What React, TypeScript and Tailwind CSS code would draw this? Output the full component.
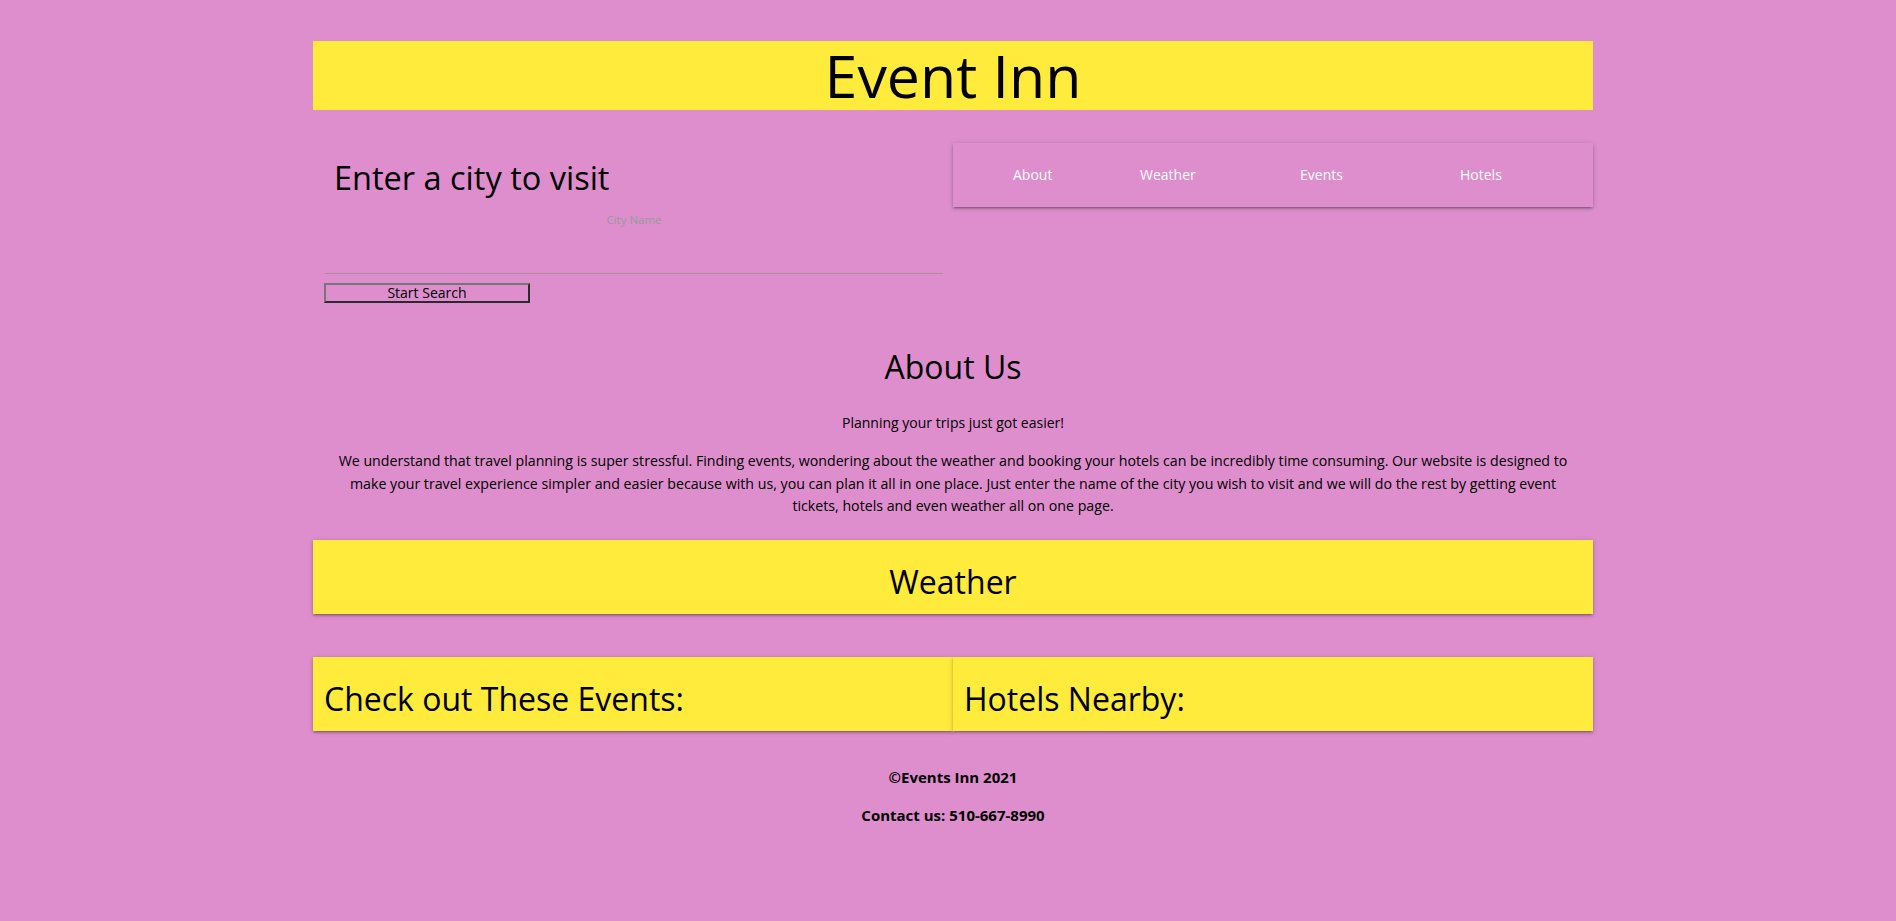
import React from 'react'

const cardShadow = 'shadow-[0_2px_2px_0_rgba(0,0,0,0.14),0_3px_1px_-2px_rgba(0,0,0,0.12),0_1px_5px_0_rgba(0,0,0,0.2)]'

function Nav() {
  const links = [
    { label: 'About', width: 'w-[127px]' },
    { label: 'Weather', width: 'w-[160px]' },
    { label: 'Events', width: 'w-[160px]' },
    { label: 'Hotels', width: 'w-auto' },
  ]
  return (
    <nav className={`flex h-[64px] items-center pl-[60px] ${cardShadow}`}>
      {links.map(link => (
        <a key={link.label} href="#" className={`${link.width} text-[14px] leading-[64px] text-white`}>
          {link.label}
        </a>
      ))}
    </nav>
  )
}

function SearchBox() {
  return (
    <div>
      <h4 className="mt-[17px] pl-[21px] text-[32.5px] leading-[35px]">Enter a city to visit</h4>
      <div className="ml-[12px] h-[79px] w-[618px] border-b border-[#a590a2]">
        <input
          type="text"
          placeholder="City Name"
          className="mt-[14px] h-[20px] w-full bg-transparent text-center text-[11.5px] outline-none placeholder:text-[#959c95]"
        />
      </div>
      <button
        type="button"
        className="ml-[11px] mt-[9px] h-[20px] w-[206px] border-2 border-t-[#767676] border-l-[#767676] border-r-[#2b2b2b] border-b-[#2b2b2b] text-[14px] leading-[16px]"
      >
        Start Search
      </button>
    </div>
  )
}

function Card({ title, center }: { title: string, center?: boolean }) {
  return (
    <div className={`h-[74px] bg-[#ffeb3b] px-[11px] pt-[23px] ${cardShadow} ${center ? 'text-center' : ''}`}>
      <h4 className="text-[32px] leading-[37px]">{title}</h4>
    </div>
  )
}

export default function App() {
  return (
    <div
      className="min-h-[921px] bg-[#de8ecd] pl-[10px] pb-[40px] text-black"
      style={{ fontFamily: '"Open Sans", "Noto Sans", sans-serif' }}
    >
      <div className="mx-auto w-[1280px] pt-[41px]">
        <header className="h-[69px] bg-[#ffeb3b] text-center">
          <h1 className="text-[59px] leading-[69px]">Event Inn</h1>
        </header>

        <div className="mt-[33px] grid grid-cols-2">
          <SearchBox />
          <div>
            <Nav />
          </div>
        </div>

        {/* About */}
        <section className="text-center">
          <h4 className="mt-[45px] text-[32px] leading-[35px]">About Us</h4>
          <p className="mt-[28px] text-[14px] leading-[22.5px]">Planning your trips just got easier!</p>
          <p className="mt-[15.5px] text-[14.2px] leading-[22.5px]">
            We understand that travel planning is super stressful. Finding events, wondering about the weather and booking your hotels can be incredibly time consuming. Our website is designed to
            <br />
            make your travel experience simpler and easier because with us, you can plan it all in one place. Just enter the name of the city you wish to visit and we will do the rest by getting event
            <br />
            tickets, hotels and even weather all on one page.
          </p>
        </section>

        <div className="mt-[22.5px]">
          <Card title="Weather" center />
        </div>

        <div className="mt-[43px] grid grid-cols-2">
          <Card title="Check out These Events:" />
          <Card title="Hotels Nearby:" />
        </div>

        <footer className="mt-[35px] text-center text-[15px] font-bold leading-[22.5px] text-black">
          <p>©Events Inn 2021</p>
          <p className="mt-[15px]">Contact us: 510-667-8990</p>
        </footer>
      </div>
    </div>
  )
}
